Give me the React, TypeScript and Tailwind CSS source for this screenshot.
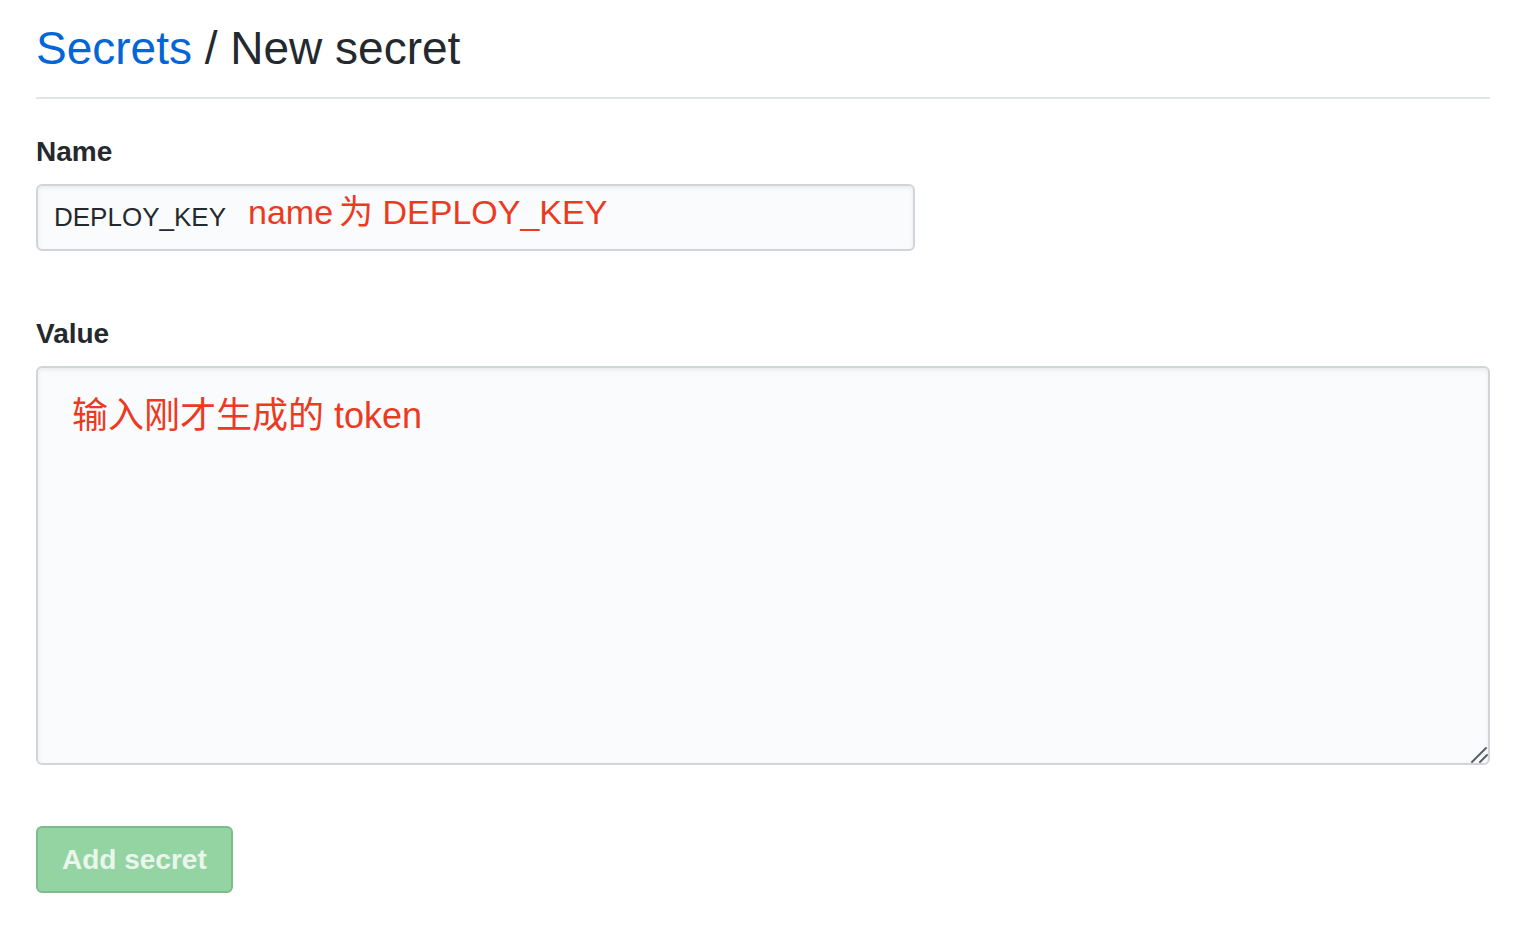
export default function App() {
  const font = { fontFamily: '"Liberation Sans", "Noto Sans CJK SC", sans-serif' };

  return (
    <div className="min-h-screen bg-white pl-[36px] pr-[34px] pt-[18px] text-[#24292e]" style={font}>
      {/* header */}
      <div className="border-b-2 border-[#e1e4e8] pb-[19px]">
        <h2 className="text-[46px] leading-[60px] font-normal">
          <a className="text-[#0366d6]">Secrets</a> / New secret
        </h2>
      </div>

      <form className="flex flex-col">
        <label className="mt-[32px] text-[28px] leading-[42px] font-bold">Name</label>
        <div className="mt-[11px] flex h-[67px] w-[879px] items-center rounded-[6px] border-2 border-[#d1d5da] bg-[#fafbfc] px-[16px] shadow-[inset_0_2px_4px_rgba(27,31,35,0.075)]">
          <span className="text-[26px]">DEPLOY_KEY</span>
          <span className="ml-[22px] -mt-[10px] text-[34px] text-[#ec3a22]">
            name<span className="ml-[6px]">为 DEPLOY_KEY</span>
          </span>
        </div>

        <label className="mt-[62px] text-[28px] leading-[42px] font-bold">Value</label>
        <div className="relative mt-[11px]">
          <textarea
            readOnly
            defaultValue="输入刚才生成的 token"
            className="block h-[399px] w-full resize-none rounded-[6px] border-2 border-[#d1d5da] bg-[#fafbfc] px-[34px] pt-[26px] text-[36px] leading-[44px] text-[#ec3a22] shadow-[inset_0_2px_4px_rgba(27,31,35,0.075)] outline-none"
          />
          {/* resize grip */}
          <svg className="pointer-events-none absolute right-0 bottom-0 h-[22px] w-[22px]" viewBox="0 0 22 22">
            <path d="M4 19L18 5M12 19L19 12" stroke="#5a6068" strokeWidth="2" strokeLinecap="round" />
          </svg>
        </div>

        <div className="mt-[61px]">
          <button
            type="button"
            disabled
            className="h-[67px] rounded-[6px] border-2 border-[#7fbc8c] bg-[#94d3a2] px-[24px] text-[28px] font-bold text-white/80"
          >
            Add secret
          </button>
        </div>
      </form>
    </div>
  );
}
